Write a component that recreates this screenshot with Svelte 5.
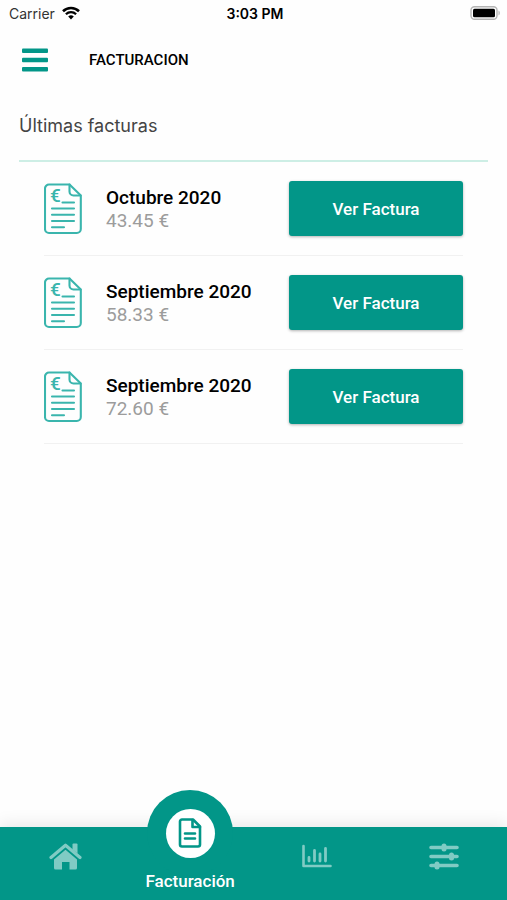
<script lang="ts">
  type Invoice = { id: number; month: string; amount: string };

  const invoices: Invoice[] = [
    { id: 1, month: 'Octubre 2020', amount: '43.45 €' },
    { id: 2, month: 'Septiembre 2020', amount: '58.33 €' },
    { id: 3, month: 'Septiembre 2020', amount: '72.60 €' },
  ];

  const tabs = [
    { id: 'inicio', label: 'Inicio' },
    { id: 'facturacion', label: 'Facturación' },
    { id: 'consumo', label: 'Consumo' },
    { id: 'ajustes', label: 'Ajustes' },
  ];

  let active = $state('facturacion');
</script>

{#snippet tabIcon(id: string)}
  {#if id === 'inicio'}
    <svg width="38" height="27" viewBox="-5 0 38 27" aria-hidden="true">
      <path d="M2 14.5 L16.500 2.200 L31 14.500" fill="none" stroke="currentColor" stroke-width="3.200" stroke-linecap="round" stroke-linejoin="round" />
      <path d="M23.500 1.500a1 1 0 0 1 1-1h3a1 1 0 0 1 1 1v9L23.500 6.500z" fill="currentColor" />
      <path d="M16.500 6.800 L28 16.500V25a1.500 1.500 0 0 1-1.500 1.500h-6v-7.500h-7.500v7.500H6.500a1.500 1.500 0 0 1-1.500-1.500V16.500z" fill="currentColor" />
    </svg>
  {:else if id === 'facturacion'}
    <svg width="24" height="30" viewBox="0 0 24 30" fill="none" stroke="currentColor" stroke-width="2.6" stroke-linejoin="round" stroke-linecap="round" aria-hidden="true">
      <path d="M4 1.500h11l7 7v18a2 2 0 0 1-2 2H4a2 2 0 0 1-2-2v-23a2 2 0 0 1 2-2z" />
      <path d="M14.500 2v7H22" />
      <path d="M7 15.500h10M7 20.500h10" />
    </svg>
  {:else if id === 'consumo'}
    <svg width="30" height="26" viewBox="0 0 30 26" fill="none" stroke="currentColor" stroke-linecap="round" aria-hidden="true">
      <path d="M1.500 3v20H28.500" stroke-width="2.6" stroke-linejoin="round" />
      <path d="M7 14.500v3.500M12.500 7.500v10.500M18 11v7M23.500 5.500v12.500" stroke-width="2.8" />
    </svg>
  {:else}
    <svg width="30" height="27" viewBox="0 0 30 27" aria-hidden="true">
      <path d="M2 4.500h26M2 13.500h26M2 22.500h26" fill="none" stroke="currentColor" stroke-width="3.6" stroke-linecap="round" />
      <g fill="currentColor">
        <rect x="12.5" y="0.5" width="5" height="8" rx="2.5" />
        <rect x="20" y="9.5" width="5" height="8" rx="2.5" />
        <rect x="5.5" y="18.5" width="5" height="8" rx="2.5" />
      </g>
    </svg>
  {/if}
{/snippet}

<div class="app">
  <div class="status">
    <div class="carrier">
      <span>Carrier</span>
      <svg width="18" height="14" viewBox="0 0 18 14" aria-hidden="true">
        <path d="M1 5.200a11.500 11.500 0 0 1 16 0" fill="none" stroke="#000" stroke-width="2.6" />
        <path d="M3.900 8.200a7.300 7.300 0 0 1 10.200 0" fill="none" stroke="#000" stroke-width="2.3" />
        <path d="M9 13.500 L6.200 10.600a4 4 0 0 1 5.600 0z" fill="#000" />
      </svg>
    </div>
    <span class="time">3:03 PM</span>
    <div class="battery">
      <svg width="31" height="14" viewBox="0 0 31 14" aria-hidden="true">
        <rect x="1" y="0.7" width="26" height="12.6" rx="3.5" fill="#fff" stroke="#b4b4b4" stroke-width="1.4" />
        <rect x="3" y="2.7" width="22" height="8.6" rx="1.5" fill="#000" />
        <path d="M28.500 4.500a3 3 0 0 1 0 5z" fill="#b4b4b4" />
      </svg>
    </div>
  </div>

  <header>
    <button class="menu" type="button" aria-label="Menú">
      <svg width="26" height="24" viewBox="0 0 26 24" aria-hidden="true">
        <g fill="#029688">
          <rect y="0.5" width="26" height="4.5" rx="1" />
          <rect y="9.7" width="26" height="4.5" rx="1" />
          <rect y="19" width="26" height="4.5" rx="1" />
        </g>
      </svg>
    </button>
    <h1>FACTURACION</h1>
  </header>

  <main>
    <h2>Últimas facturas</h2>
    <ul>
      {#each invoices as invoice (invoice.id)}
        <li>
          <svg class="doc" width="38" height="52" viewBox="0 0 38 52" fill="none" stroke="#3ab5ad" stroke-width="2.1" stroke-linecap="round" stroke-linejoin="round" aria-hidden="true">
            <path d="M5 1.500h20.500L36.800 12.500V46a4 4 0 0 1-4 4H5a4 4 0 0 1-4-4V5.500a4 4 0 0 1 4-4z" />
            <path d="M25.500 1.500v7a4 4 0 0 0 4 4h7" />
            <path d="M18.500 19.500H30M8 25.500h22M8 31.700h22M8 38h22M8 44.300h12" />
            <text x="6" y="19" fill="#3ab5ad" stroke="none">€</text>
          </svg>
          <div class="info">
            <span class="month">{invoice.month}</span>
            <span class="amount">{invoice.amount}</span>
          </div>
          <button class="view" type="button">Ver Factura</button>
        </li>
      {/each}
    </ul>
  </main>

  <nav>
    {#each tabs as tab (tab.id)}
      <button
        type="button"
        class="tab"
        class:active={active === tab.id}
        aria-label={tab.label}
        onclick={() => (active = tab.id)}
      >
        {#if active === tab.id}
          <span class="bump"><span class="disc">{@render tabIcon(tab.id)}</span></span>
          <span class="label">{tab.label}</span>
        {:else}
          {@render tabIcon(tab.id)}
        {/if}
      </button>
    {/each}
  </nav>
</div>

<style>
  :global(body) { margin: 0; background: #fefefe; }
  .app {
    display: flex;
    flex-direction: column;
    min-height: 100vh;
    font-family: Roboto, 'Liberation Sans', sans-serif;
    color: #000;
  }
  button {
    border: 0;
    padding: 0;
    background: none;
    font-family: inherit;
    cursor: pointer;
  }
  svg { display: block; }

  .status {
    display: grid;
    grid-template-columns: 1fr auto 1fr;
    align-items: center;
    height: 26px;
    padding: 0 6px 0 9px;
    font-family: Inter, sans-serif;
    font-size: 14px;
  }
  .carrier { display: flex; align-items: center; gap: 7px; color: #333; }
  .time { font-weight: 600; }
  .battery { justify-self: end; }

  header {
    display: flex;
    align-items: center;
    gap: 41px;
    height: 68px;
    padding: 0 22px;
  }
  h1 { margin: 0; font-size: 15px; font-weight: 500; }

  main { flex: 1; padding: 0 19px; }
  h2 {
    margin: 0;
    padding: 20px 0 22px;
    border-bottom: 2px solid #cdeee5;
    font-family: Inter, sans-serif;
    font-size: 18px;
    font-weight: 400;
    line-height: 24px;
    color: #444;
  }
  ul { list-style: none; margin: 0; padding: 0 25px; }
  li {
    display: flex;
    align-items: center;
    height: 93px;
    border-bottom: 1px solid #f1f1f1;
  }
  .doc text { font-family: Roboto, sans-serif; font-size: 19px; font-weight: 500; }
  .info {
    display: flex;
    flex-direction: column;
    flex: 1;
    margin-left: 24px;
    font-size: 19px;
    line-height: 23px;
  }
  .month { font-weight: 500; }
  .amount { color: #9c9c9c; }
  .view {
    width: 174px;
    height: 55px;
    border-radius: 3px;
    background: #029688;
    color: #fff;
    font-size: 17px;
    font-weight: 500;
    box-shadow: 0 1px 3px rgba(0, 0, 0, 0.3);
  }

  nav {
    display: flex;
    height: 73px;
    background: #029688;
    box-shadow: 0 -2px 16px rgba(0, 0, 0, 0.1);
  }
  .tab {
    position: relative;
    display: flex;
    flex: 1;
    justify-content: center;
    align-items: flex-start;
    padding-top: 16px;
    color: #80cbc4;
  }
  .active { align-items: flex-end; padding: 0 0 8px; color: #fff; }
  /* raised circle sticking out over the bar */
  .bump {
    position: absolute;
    top: -37px;
    left: 50%;
    display: flex;
    align-items: center;
    justify-content: center;
    width: 86px;
    height: 86px;
    border-radius: 50%;
    background: #029688;
    transform: translateX(-50%);
  }
  .disc {
    display: flex;
    align-items: center;
    justify-content: center;
    width: 49px;
    height: 49px;
    border-radius: 50%;
    background: #fff;
    color: #029688;
  }
  .label { position: relative; font-size: 17px; font-weight: 500; line-height: 22px; }
</style>
